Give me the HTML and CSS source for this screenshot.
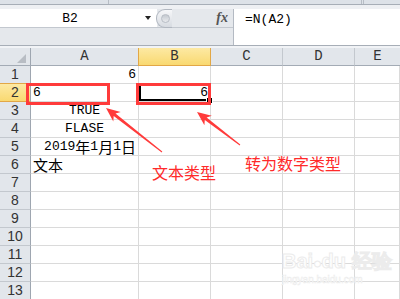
FILE: index.html
```html
<!DOCTYPE html>
<html>
<head>
    <title>N函数</title>
    <link rel="stylesheet" href="styles.css">
</head>
<body>
    <div class="top-strip">
        <span class="tick t1"></span>
        <span class="tick t2"></span>
        <span class="tick t3"></span>
    </div>

    <div class="formula-bar">
        <div class="name-side">
            <div class="name-row">
                <div class="name-box">
                    <span class="name-text">B2</span>
                    <span class="dropdown"></span>
                </div>
                <div class="splitter"><span class="knob"></span></div>
                <span class="fx">fx</span>
            </div>
            <div class="name-gap"></div>
        </div>
        <div class="formula-input">=N(A2)</div>
    </div>
    <div class="bar-gap"></div>

    <div class="sheet">
        <div class="hdr corner"><span class="corner-tri"></span></div>
        <div class="hdr">A</div>
        <div class="hdr sel">B</div>
        <div class="hdr">C</div>
        <div class="hdr">D</div>
        <div class="hdr last">E</div>

        <div class="rh">1</div>
        <div class="c r">6</div><div class="c"></div><div class="c"></div><div class="c"></div><div class="c"></div>

        <div class="rh sel">2</div>
        <div class="c">6</div><div class="c r active">6</div><div class="c"></div><div class="c"></div><div class="c"></div>

        <div class="rh">3</div>
        <div class="c m">TRUE</div><div class="c"></div><div class="c"></div><div class="c"></div><div class="c"></div>

        <div class="rh">4</div>
        <div class="c m">FLASE</div><div class="c"></div><div class="c"></div><div class="c"></div><div class="c"></div>

        <div class="rh">5</div>
        <div class="c r">2019<span class="cjk">年</span>1<span class="cjk">月</span>1<span class="cjk">日</span></div><div class="c"></div><div class="c"></div><div class="c"></div><div class="c"></div>

        <div class="rh">6</div>
        <div class="c"><span class="cjk">文本</span></div><div class="c"></div><div class="c"></div><div class="c"></div><div class="c"></div>

        <div class="rh">7</div>
        <div class="c"></div><div class="c"></div><div class="c"></div><div class="c"></div><div class="c"></div>
        <div class="rh">8</div>
        <div class="c"></div><div class="c"></div><div class="c"></div><div class="c"></div><div class="c"></div>
        <div class="rh">9</div>
        <div class="c"></div><div class="c"></div><div class="c"></div><div class="c"></div><div class="c"></div>
        <div class="rh">10</div>
        <div class="c"></div><div class="c"></div><div class="c"></div><div class="c"></div><div class="c"></div>
        <div class="rh">11</div>
        <div class="c"></div><div class="c"></div><div class="c"></div><div class="c"></div><div class="c"></div>
        <div class="rh">12</div>
        <div class="c"></div><div class="c"></div><div class="c"></div><div class="c"></div><div class="c"></div>
        <div class="rh">13</div>
        <div class="c"></div><div class="c"></div><div class="c"></div><div class="c"></div><div class="c"></div>
    </div>

    <!-- annotations drawn over the sheet -->
    <div class="mark mark-a"></div>
    <div class="mark mark-b"></div>
    <svg class="arrows" width="400" height="299" viewBox="0 0 400 299">
        <polygon points="106,108 120.7,112 115.5,113.6 162.3,151.6 161.7,152.4 113.7,115.9 113.3,121.4"/>
        <polygon points="197,112 211.8,115.7 206.6,117.5 240.3,144.6 239.7,145.4 204.8,119.9 204.4,125.3"/>
    </svg>
    <div class="label label-a">文本类型</div>
    <div class="label label-b">转为数字类型</div>

    <div class="watermark">
        <div class="wm-logo">Bai<span class="paw">●</span>du 经验</div>
        <div class="wm-url">jingyan.baidu.com</div>
    </div>
</body>
</html>
```

FILE: styles.css
```css
body {
    margin: 0;
    width: 400px;
    height: 299px;
    overflow: hidden;
    position: relative;
    background-color: #fff;
    font-family: "Liberation Mono", "Noto Sans CJK SC", monospace;
    color: #000;
}

/* ribbon edge */
.top-strip {
    height: 4px;
    display: flex;
    background-color: #dde2e8;
    border-bottom: 1px solid #a7aeb7;
}
.tick {
    width: 1px;
    background-color: #b7bdc5;
}
.t1 { margin-left: 108px; }
.t2 { margin-left: 252px; }
.t3 { margin-left: 1px; }

/* formula bar */
.formula-bar {
    display: flex;
    height: 36px;
    padding-top: 4px;
    background-color: #eef0f3;
    border-bottom: 1px solid #a7aeb7;
}
.name-side {
    width: 233px;
    display: flex;
    flex-direction: column;
    border-right: 1px solid #b4bac3;
}
.name-row {
    height: 18px;
    display: flex;
    align-items: center;
    background-color: #e5e8ec;
    border-bottom: 1px solid #c3c8cf;
}
.name-box {
    width: 157px;
    height: 18px;
    display: flex;
    align-items: center;
    background-color: #fff;
}
.name-text {
    width: 140px;
    text-align: center;
    font-size: 13px;
}
.dropdown {
    width: 0;
    height: 0;
    margin-left: 5px;
    border-left: 3px solid transparent;
    border-right: 3px solid transparent;
    border-top: 4px solid #222;
}
.splitter {
    width: 15px;
    height: 17px;
    margin-left: -1px;
    display: flex;
    align-items: center;
    justify-content: center;
    border: 1px solid #b1b7c0;
    border-right: none;
    border-radius: 9px 0 0 9px;
    background: linear-gradient(#f6f7f9, #d7dbe1);
}
.knob {
    width: 7px;
    height: 7px;
    margin-left: 2px;
    border-radius: 50%;
    background: linear-gradient(#c4c9d0, #e9ebee);
    border: 1px solid #b8bdc5;
}
.fx {
    margin-left: auto;
    margin-right: 5px;
    font-family: "Liberation Serif", serif;
    font-style: italic;
    font-weight: bold;
    font-size: 14px;
    color: #555;
}
.name-gap {
    flex: 1;
    background-color: #e5e8ec;
}
.formula-input {
    flex: 1;
    background-color: #fff;
    padding: 3px 0 0 11px;
    font-size: 13px;
    line-height: 15px;
}
.bar-gap {
    height: 2px;
    background-color: #f1f3f6;
}

/* grid */
.sheet {
    display: grid;
    grid-template-columns: 31px 108px 72px 72px 72px 1fr;
    grid-auto-rows: 18px;
}
.sheet > div {
    box-sizing: border-box;
}
.hdr {
    background-color: #e2e6eb;
    border-right: 1px solid #c3c8ce;
    border-bottom: 1px solid #a3abb5;
    font-size: 14px;
    line-height: 17px;
    text-align: center;
    color: #333;
}
.hdr.sel {
    background: linear-gradient(#fde9a3, #f9d971);
    border-right-color: #e2a746;
    border-bottom-color: #e2a746;
    border-left: 1px solid #e2a746;
    margin-left: -1px;
}
.hdr.last {
    border-right: none;
}
.corner {
    position: relative;
    border-right-color: #9ea6b0;
}
.corner-tri {
    position: absolute;
    right: 4px;
    bottom: 2px;
    width: 0;
    height: 0;
    border-left: 9px solid transparent;
    border-bottom: 9px solid #b8bdc4;
}
.rh {
    background-color: #e2e6eb;
    border-right: 1px solid #9ea6b0;
    border-bottom: 1px solid #c3c8ce;
    font-family: "Liberation Sans", sans-serif;
    font-size: 14px;
    line-height: 17px;
    text-align: center;
    color: #333;
}
.rh.sel {
    background: linear-gradient(#fde9a3, #f9d971);
    border-bottom-color: #e2a746;
    border-top: 1px solid #e2a746;
    margin-top: -1px;
}
.c {
    display: flex;
    align-items: flex-end;
    padding: 0 2px 1px;
    border-right: 1px solid #dadada;
    border-bottom: 1px solid #dadada;
    font-size: 13px;
    line-height: 14px;
    white-space: nowrap;
}
.c.r { justify-content: flex-end; }
.c.m { justify-content: center; }
.c.active {
    position: relative;
    box-shadow: inset 0 0 0 2px #000;
}
.c.active::after {
    content: "";
    position: absolute;
    right: -3px;
    bottom: -3px;
    width: 5px;
    height: 5px;
    background-color: #000;
    border: 1px solid #fff;
}
.cjk {
    font-family: "Noto Sans CJK SC", sans-serif;
    font-size: 15px;
}

/* annotations */
.mark {
    position: absolute;
    box-sizing: border-box;
    border: 3px solid #ff3b3b;
}
.mark-a {
    left: 26px;
    top: 83px;
    width: 84px;
    height: 22px;
}
.mark-b {
    left: 136px;
    top: 83px;
    width: 75px;
    height: 22px;
}
.arrows {
    position: absolute;
    left: 0;
    top: 0;
    fill: #ff3b3b;
}
.label {
    position: absolute;
    font-family: "Noto Sans CJK SC", sans-serif;
    font-size: 16px;
    line-height: 16px;
    color: #ff2a2a;
}
.label-a { left: 152px; top: 164px; }
.label-b { left: 245px; top: 155px; }

.watermark {
    position: absolute;
    left: 282px;
    top: 250px;
    color: #fff;
    -webkit-text-stroke: 1px #ececec;
    font-family: "Liberation Sans", sans-serif;
}
.wm-logo {
    font-size: 20px;
    font-weight: bold;
    line-height: 22px;
}
.paw {
    font-size: 14px;
}
.wm-url {
    font-size: 10px;
    line-height: 12px;
    -webkit-text-stroke: 0.5px #ececec;
}
```
